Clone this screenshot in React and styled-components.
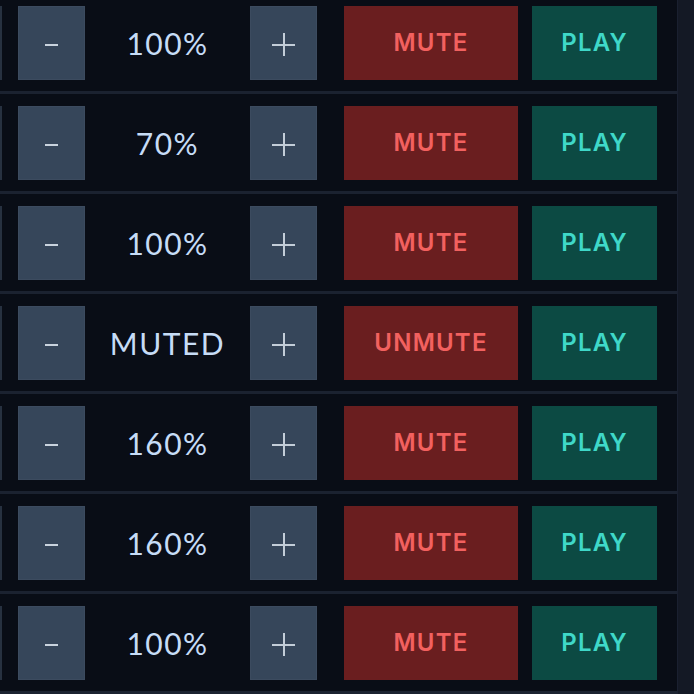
import React from 'react';
import styled, { createGlobalStyle } from 'styled-components';

const GlobalStyle = createGlobalStyle`
  html, body {
    margin: 0;
    padding: 0;
    background: #141925;
    overflow: hidden;
  }
`;

const Page = styled.div`
  display: flex;
  width: 694px;
  height: 694px;
  overflow: hidden;
  background: #141925;
`;

const List = styled.div`
  width: 677px;
  flex: none;
  background: #090d16;
  border-right: 1px solid #1a2030;
`;

const Row = styled.div`
  display: flex;
  align-items: stretch;
  height: 74px;
  padding: 12px 0 11px 0;
  border-bottom: 3px solid #1b2230;

  &:first-child {
    padding-top: 6px;
  }
`;

const Stub = styled.div`
  flex: none;
  width: 2px;
  margin-right: 16px;
  background: #273140;
`;

const StepButton = styled.button`
  flex: none;
  display: flex;
  align-items: center;
  justify-content: center;
  width: 67px;
  margin: 0;
  padding: 0;
  border: none;
  background: #36465a;
  box-shadow: inset 0 0 0 1px rgba(255, 255, 255, 0.03);
  cursor: pointer;
`;

const Minus = styled.span`
  width: 13px;
  height: 2px;
  background: #c9d3de;
  margin-top: 3px;
`;

const Plus = styled.span`
  position: relative;
  width: 23px;
  height: 23px;
  margin-top: 2px;

  &::before,
  &::after {
    content: '';
    position: absolute;
    background: #c3cdd8;
  }
  &::before {
    left: 0;
    right: 0;
    top: 11px;
    height: 2px;
  }
  &::after {
    top: 0;
    bottom: 0;
    left: 11px;
    width: 2px;
  }
`;

const Value = styled.div`
  flex: none;
  width: 165px;
  display: flex;
  align-items: center;
  justify-content: center;
  font-family: 'Lato', 'Noto Sans', sans-serif;
  font-size: 30px;
  font-weight: 400;
  letter-spacing: 1.5px;
  color: #c6dcf6;
`;

const ActionButton = styled.button`
  flex: none;
  display: flex;
  align-items: center;
  justify-content: center;
  width: ${(p) => p.$width}px;
  margin: 0 0 0 ${(p) => p.$offset}px;
  padding: 0 0 2px;
  border: none;
  font-family: 'Inter', 'Lato', sans-serif;
  font-size: 24px;
  font-weight: 600;
  letter-spacing: 1.2px;
  cursor: pointer;
  background: ${(p) => (p.$tone === 'red' ? '#6a1e1f' : '#0c4a43')};
  color: ${(p) => (p.$tone === 'red' ? '#f2615f' : '#3fd8c8')};
`;

const channels = ['100%', '70%', '100%', 'MUTED', '160%', '160%', '100%'];

function ChannelRow({ level }) {
  const muted = level === 'MUTED';
  return (
    <Row>
      <Stub />
      <StepButton>
        <Minus />
      </StepButton>
      <Value>{level}</Value>
      <StepButton>
        <Plus />
      </StepButton>
      <ActionButton $tone="red" $offset={27} $width={174}>
        {muted ? 'UNMUTE' : 'MUTE'}
      </ActionButton>
      <ActionButton $tone="teal" $offset={14} $width={125}>
        PLAY
      </ActionButton>
    </Row>
  );
}

export default function App() {
  return (
    <>
      <GlobalStyle />
      <Page>
        <List>
          {channels.map((level, i) => (
            <ChannelRow key={i} level={level} />
          ))}
        </List>
      </Page>
    </>
  );
}
